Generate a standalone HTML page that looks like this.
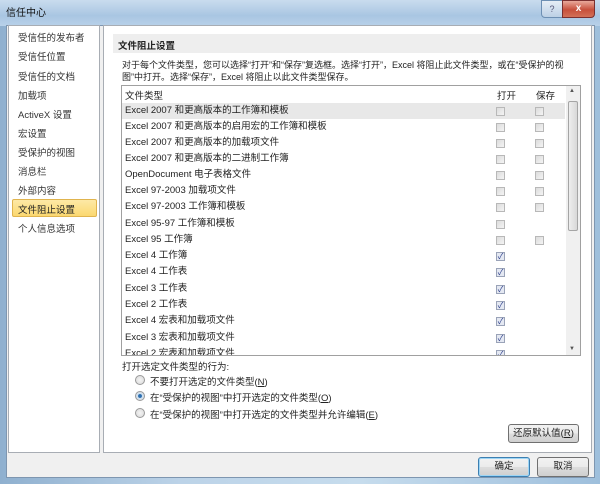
<!DOCTYPE html>
<html><head><meta charset="utf-8"><style>
*{box-sizing:border-box;margin:0;padding:0}
body{width:600px;height:484px;overflow:hidden;font-family:"Liberation Sans","Noto Sans CJK SC",sans-serif;font-size:9.5px;color:#222;position:relative;background:linear-gradient(90deg,#8fb0cf,#bcd3e8 30%,#c6dced 60%,#9ebfdc);}
.a{position:absolute}
#title{left:0;top:0;width:600px;height:26px;background:linear-gradient(180deg,#c9dcee,#a9c6e2 60%,#b8d1e9)}
#client{left:6px;top:25px;width:589px;height:453px;background:#f0f0f0;border:1px solid #7e96b0}
.pan{background:#fff;border:1px solid #a8adb4}
.nav{left:18px;font-size:9.5px;color:#333;white-space:nowrap}
.row{left:125px;width:440px;height:16px;line-height:16px;white-space:nowrap;color:#222}
.cb{width:9px;height:9px;border:1px solid #b8b8b8;background:linear-gradient(135deg,#dcdcdc,#f4f4f4)}
.ck{width:9px;height:9px;border:1px solid #9aa3b8;background:#e4e8f2;color:#2c3e8a;font-size:8px;line-height:7px;text-align:center}
.btn{border:1px solid #707070;border-radius:3px;background:linear-gradient(#f2f2f2,#ebebeb 50%,#dddddd 51%,#cfcfcf);text-align:center;line-height:17px;font-size:9.5px}
.rad{width:10px;height:10px;border-radius:50%;border:1px solid #999;background:radial-gradient(#f4f4f4,#d8d8d8)}
</style></head><body>
<div id="title" class="a"></div>
<div class="a" style="left:6px;top:4px;font-size:10px;color:#111">信任中心</div>
<div class="a" style="left:541px;top:0;width:22px;height:18px;border:1px solid #6d8fb3;border-radius:0 0 0 4px;background:linear-gradient(#e6eef6,#bcd0e5);color:#557;text-align:center;font-size:9px;line-height:16px">?</div>
<div class="a" style="left:562px;top:0;width:33px;height:18px;border:1px solid #7a3030;border-radius:0 0 4px 0;background:linear-gradient(#e9a99b,#c7503c 55%,#d27058);color:#fff;text-align:center;font-size:10px;font-weight:bold;line-height:16px">x</div>
<div id="client" class="a"></div>
<div class="a pan" style="left:8px;top:25px;width:92px;height:428px"></div>
<div class="a nav" style="top:30px">受信任的发布者</div>
<div class="a nav" style="top:49px">受信任位置</div>
<div class="a nav" style="top:69px">受信任的文档</div>
<div class="a nav" style="top:88px">加载项</div>
<div class="a nav" style="top:107px">ActiveX 设置</div>
<div class="a nav" style="top:126px">宏设置</div>
<div class="a nav" style="top:145px">受保护的视图</div>
<div class="a nav" style="top:164px">消息栏</div>
<div class="a nav" style="top:183px">外部内容</div>
<div class="a" style="left:12px;top:199px;width:85px;height:18px;border:1px solid #e0b44e;border-radius:2px;background:linear-gradient(#fde9a6,#fbd870)"></div>
<div class="a nav" style="top:202px;color:#222">文件阻止设置</div>
<div class="a nav" style="top:221px">个人信息选项</div>
<div class="a pan" style="left:103px;top:25px;width:489px;height:428px"></div>
<div class="a" style="left:113px;top:34px;width:467px;height:19px;background:#eeeeee"></div>
<div class="a" style="left:118px;top:38px;font-weight:bold;font-size:9.5px">文件阻止设置</div>
<div class="a" style="left:122px;top:59px;width:460px;line-height:12px;font-size:9px">对于每个文件类型，您可以选择“打开”和“保存”复选框。选择“打开”，Excel 将阻止此文件类型，或在“受保护的视图”中打开。选择“保存”，Excel 将阻止以此文件类型保存。</div>
<div class="a" style="left:121px;top:85px;width:460px;height:271px;border:1px solid #a0a0a0;background:#fff;overflow:hidden">
</div>
<div class="a" style="left:122px;top:103px;width:443px;height:16px;background:#e8e8e8"></div>
<div class="a" style="left:125px;top:88px">文件类型</div>
<div class="a" style="left:497px;top:88px">打开</div>
<div class="a" style="left:536px;top:88px">保存</div>
<div class="a" style="left:566px;top:86px;width:14px;height:269px;background:#f0f0f0"></div>
<div class="a" style="left:568px;top:101px;width:10px;height:130px;border:1px solid #a5a5a5;border-radius:2px;background:linear-gradient(90deg,#eee,#d8d8d8)"></div>
<div class="a" style="left:569px;top:88px;font-size:6px;color:#555">▲</div>
<div class="a" style="left:569px;top:346px;font-size:6px;color:#555">▼</div>
<div class="a" style="left:122px;top:103px;width:443px;height:252px;overflow:hidden">
<div style="position:relative">
<div class="a row" style="left:3px;top:0">Excel 2007 和更高版本的工作簿和模板</div>
<div class="a row" style="left:3px;top:16px">Excel 2007 和更高版本的启用宏的工作簿和模板</div>
<div class="a row" style="left:3px;top:32px">Excel 2007 和更高版本的加载项文件</div>
<div class="a row" style="left:3px;top:48px">Excel 2007 和更高版本的二进制工作簿</div>
<div class="a row" style="left:3px;top:64px">OpenDocument 电子表格文件</div>
<div class="a row" style="left:3px;top:80px">Excel 97-2003 加载项文件</div>
<div class="a row" style="left:3px;top:96px">Excel 97-2003 工作簿和模板</div>
<div class="a row" style="left:3px;top:113px">Excel 95-97 工作簿和模板</div>
<div class="a row" style="left:3px;top:129px">Excel 95 工作簿</div>
<div class="a row" style="left:3px;top:145px">Excel 4 工作簿</div>
<div class="a row" style="left:3px;top:161px">Excel 4 工作表</div>
<div class="a row" style="left:3px;top:178px">Excel 3 工作表</div>
<div class="a row" style="left:3px;top:194px">Excel 2 工作表</div>
<div class="a row" style="left:3px;top:210px">Excel 4 宏表和加载项文件</div>
<div class="a row" style="left:3px;top:227px">Excel 3 宏表和加载项文件</div>
<div class="a row" style="left:3px;top:243px">Excel 2 宏表和加载项文件</div>
<div class="a cb" style="left:374px;top:4px"></div><div class="a cb" style="left:413px;top:4px"></div>
<div class="a cb" style="left:374px;top:20px"></div><div class="a cb" style="left:413px;top:20px"></div>
<div class="a cb" style="left:374px;top:36px"></div><div class="a cb" style="left:413px;top:36px"></div>
<div class="a cb" style="left:374px;top:52px"></div><div class="a cb" style="left:413px;top:52px"></div>
<div class="a cb" style="left:374px;top:68px"></div><div class="a cb" style="left:413px;top:68px"></div>
<div class="a cb" style="left:374px;top:84px"></div><div class="a cb" style="left:413px;top:84px"></div>
<div class="a cb" style="left:374px;top:100px"></div><div class="a cb" style="left:413px;top:100px"></div>
<div class="a cb" style="left:374px;top:117px"></div>
<div class="a cb" style="left:374px;top:133px"></div><div class="a cb" style="left:413px;top:133px"></div>
<div class="a ck" style="left:374px;top:149px">✓</div>
<div class="a ck" style="left:374px;top:165px">✓</div>
<div class="a ck" style="left:374px;top:182px">✓</div>
<div class="a ck" style="left:374px;top:198px">✓</div>
<div class="a ck" style="left:374px;top:214px">✓</div>
<div class="a ck" style="left:374px;top:231px">✓</div>
<div class="a ck" style="left:374px;top:247px">✓</div>
</div></div>
<div class="a" style="left:122px;top:359px">打开选定文件类型的行为:</div>
<div class="a rad" style="left:135px;top:375px"></div>
<div class="a" style="left:150px;top:374px">不要打开选定的文件类型(<u>N</u>)</div>
<div class="a rad" style="left:135px;top:391px;background:radial-gradient(#2d6fb0 30%,#cfe0f0 40%,#e0e0e0)"></div>
<div class="a" style="left:150px;top:390px">在“受保护的视图”中打开选定的文件类型(<u>O</u>)</div>
<div class="a rad" style="left:135px;top:408px"></div>
<div class="a" style="left:150px;top:407px">在“受保护的视图”中打开选定的文件类型并允许编辑(<u>E</u>)</div>
<div class="a btn" style="left:508px;top:424px;width:71px;height:19px">还原默认值(<u>R</u>)</div>
<div class="a btn" style="left:478px;top:457px;width:52px;height:20px;border-color:#3c7fb1;box-shadow:inset 0 0 0 1px #9dd5f5">确定</div>
<div class="a btn" style="left:537px;top:457px;width:52px;height:20px">取消</div>
</body></html>
